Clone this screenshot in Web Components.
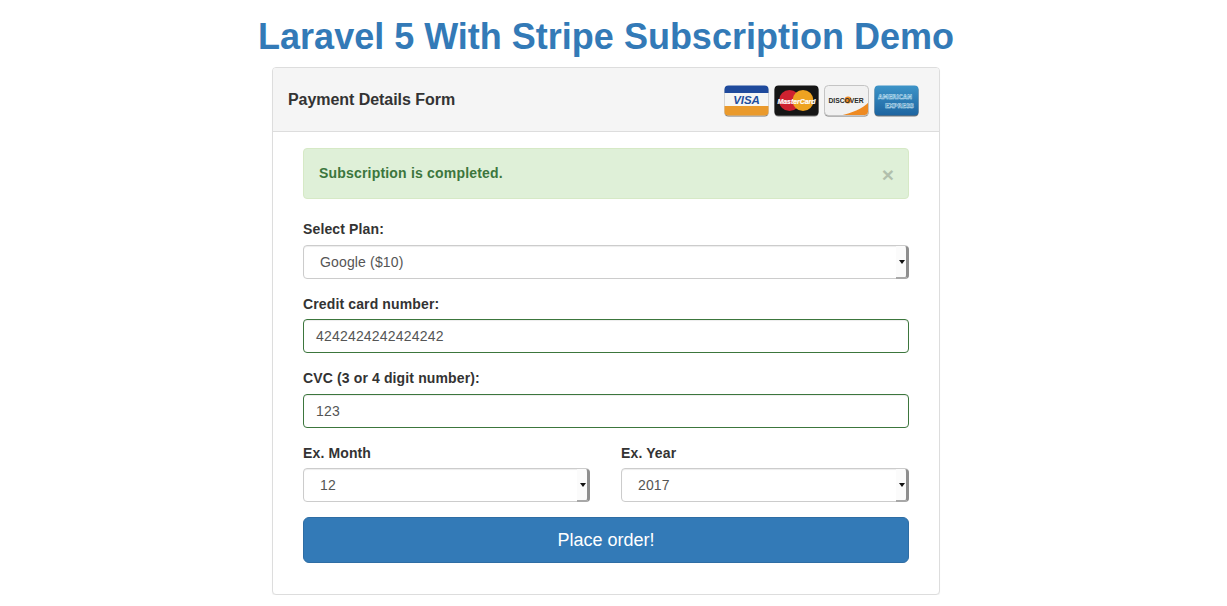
<!DOCTYPE html>
<html>
<head>
<meta charset="utf-8">
<title>Laravel 5 With Stripe Subscription Demo</title>
<style>
  html, body { margin: 0; padding: 0; background: #fff; }
  body { font-family: "Liberation Sans", Arial, sans-serif; font-size: 14px; color: #333; }
</style>
</head>
<body>

<template class="subscription-page-template">
  <style>
    :host { display: block; width: 1212px; box-sizing: border-box; }
    h1 { margin: 0; padding-top: 17px; height: 67px; box-sizing: border-box; text-align: center; color: #337ab7; font-size: 36px; line-height: 40px; font-weight: bold; }
    .wrap { width: 668px; margin: 0 auto; }
  </style>
  <h1><slot name="title"></slot></h1>
  <div class="wrap"><slot></slot></div>
</template>

<template class="form-panel-template">
  <style>
    :host { display: block; border: 1px solid #ddd; border-radius: 4px; box-shadow: 0 1px 1px rgba(0,0,0,.05); background: #fff; }
    .head { display: flex; align-items: center; justify-content: space-between; height: 64px; box-sizing: border-box; padding: 0 20px 0 15px; background: #f5f5f5; border-bottom: 1px solid #ddd; border-radius: 3px 3px 0 0; font-size: 16px; font-weight: bold; letter-spacing: -0.05px; color: #333; }
    .cards { display: flex; gap: 5px; margin-top: 2px; }
    .body { padding: 16px 30px 31px; }
  </style>
  <div class="head"><slot name="heading"></slot><div class="cards"><slot name="cards"></slot></div></div>
  <div class="body"><slot></slot></div>
</template>

<template class="card-logo-template">
  <style>
    :host { display: block; width: 45px; height: 32px; }
    svg { display: block; }
  </style>
  <svg width="45" height="32" viewBox="0 0 45 32"></svg>
</template>

<template class="alert-box-template">
  <style>
    :host { display: flex; align-items: center; justify-content: space-between; height: 51px; box-sizing: border-box; padding: 0 15px 2px; margin-bottom: 20.49px; background: #dff0d8; border: 1px solid #d6e9c6; border-radius: 4px; color: #3c763d; font-weight: bold; font-size: 14px; letter-spacing: 0.19px; }
    .close { font-size: 21px; line-height: 21px; color: #000; opacity: .2; margin: 3px -1px 0 0; letter-spacing: 0; }
  </style>
  <span><slot></slot></span>
  <span class="close">×</span>
</template>

<template class="form-field-template">
  <style>
    :host { display: block; margin-bottom: 14.89px; }
    label { display: block; font-weight: bold; font-size: 14px; letter-spacing: 0.13px; line-height: 20px; margin-bottom: 5.51px; color: #333; }
  </style>
  <label><slot name="label"></slot></label>
  <slot></slot>
</template>

<template class="select-box-template">
  <style>
    :host { display: block; position: relative; height: 34px; box-sizing: border-box; background: #fff; border: 1px solid #ccc; border-radius: 4px; font-size: 14px; letter-spacing: 0.15px; line-height: 32px; color: #555; padding-left: 16px; box-shadow: inset 0 1px 1px rgba(0,0,0,.075); }
    .btn { position: absolute; top: 0; right: -1px; bottom: -1px; width: 13px; border-right: 3px solid #8e8e8e; border-bottom: 2px solid #a8a8a8; border-radius: 0 4px 4px 0; box-sizing: border-box; background: #fbfbfb; }
    .btn::after { content: ""; position: absolute; left: 3px; top: 14px; border: 3px solid transparent; border-top: 4px solid #111; border-bottom: 0; }
  </style>
  <slot></slot>
  <span class="btn"></span>
</template>

<template class="text-box-template">
  <style>
    :host { display: block; height: 34px; box-sizing: border-box; background: #fff; border: 1px solid #3c763d; border-radius: 4px; font-size: 14px; letter-spacing: 0.19px; line-height: 32px; color: #555; padding-left: 12px; box-shadow: inset 0 1px 1px rgba(0,0,0,.075); }
  </style>
  <slot></slot>
</template>

<template class="two-columns-template">
  <style>
    :host { display: grid; grid-template-columns: 287px 288px; column-gap: 31px; margin-bottom: -0.4px; }
  </style>
  <slot></slot>
</template>

<template class="submit-button-template">
  <style>
    :host { display: block; height: 46px; box-sizing: border-box; background: #337ab7; border: 1px solid #2e6da4; border-radius: 6px; color: #fff; font-size: 18px; line-height: 44px; text-align: center; }
  </style>
  <slot></slot>
</template>

<subscription-page>
  <span slot="title">Laravel 5 With Stripe Subscription Demo</span>
  <form-panel>
    <span slot="heading">Payment Details Form</span>
    <card-logo slot="cards" kind="visa"></card-logo>
    <card-logo slot="cards" kind="mastercard"></card-logo>
    <card-logo slot="cards" kind="discover"></card-logo>
    <card-logo slot="cards" kind="amex"></card-logo>

    <alert-box>Subscription is completed.</alert-box>

    <form-field>
      <span slot="label">Select Plan:</span>
      <select-box>Google ($10)</select-box>
    </form-field>
    <form-field>
      <span slot="label">Credit card number:</span>
      <text-box>4242424242424242</text-box>
    </form-field>
    <form-field>
      <span slot="label">CVC (3 or 4 digit number):</span>
      <text-box>123</text-box>
    </form-field>
    <two-columns>
      <form-field>
        <span slot="label">Ex. Month</span>
        <select-box>12</select-box>
      </form-field>
      <form-field>
        <span slot="label">Ex. Year</span>
        <select-box>2017</select-box>
      </form-field>
    </two-columns>
    <submit-button>Place order!</submit-button>
  </form-panel>
</subscription-page>

<script>
// Small helper: every element below is just a template in a shadow root.
function templated(selector) {
  return class extends HTMLElement {
    constructor() {
      super()
      this.root = this.attachShadow({ mode: 'open' })
      this.root.appendChild(document.querySelector(selector).content.cloneNode(true))
    }
  }
}

customElements.define('subscription-page', templated('.subscription-page-template'))
customElements.define('form-panel', templated('.form-panel-template'))
customElements.define('alert-box', templated('.alert-box-template'))
customElements.define('form-field', templated('.form-field-template'))
customElements.define('select-box', templated('.select-box-template'))
customElements.define('text-box', templated('.text-box-template'))
customElements.define('two-columns', templated('.two-columns-template'))
customElements.define('submit-button', templated('.submit-button-template'))

/**
 * A credit card logo, picked with the kind attribute.
 */
class CardLogo extends templated('.card-logo-template') {
  connectedCallback() {
    const frame = '<rect x="0.5" y="1.5" width="44" height="30" rx="4" fill="#555" opacity=".8"/>'
    this.root.querySelector('svg').innerHTML = frame + CardLogo.art[this.getAttribute('kind')]
  }
}

const logoFont = 'font-family="Liberation Sans" font-weight="bold"'
const wideFont = 'font-family="DejaVu Sans" font-weight="bold"'
CardLogo.art = {
  visa: `
    <clipPath id="c"><rect x="0.5" y="0.5" width="44" height="30" rx="4"/></clipPath>
    <g clip-path="url(#c)">
      <rect width="45" height="31" fill="#f6f6f4"/>
      <rect width="45" height="8" fill="#1f4a9c"/>
      <rect y="21" width="45" height="10" fill="#ea9a2c"/>
    </g>
    <text x="22.5" y="19" text-anchor="middle" ${logoFont} font-style="italic" font-size="11.5" fill="#1f4f9f">VISA</text>`,
  mastercard: `
    <rect x="0.5" y="0.5" width="44" height="30" rx="4" fill="#161616"/>
    <circle cx="15.5" cy="15.5" r="10.5" fill="#cf2230"/>
    <circle cx="29" cy="15.5" r="10.5" fill="#eea321"/>
    <text x="22.5" y="18.5" text-anchor="middle" ${logoFont} font-style="italic" font-size="7.8" textLength="38" lengthAdjust="spacingAndGlyphs" fill="#fff" stroke="#fff" stroke-width=".2">MasterCard</text>`,
  discover: `
    <clipPath id="c"><rect x="0.5" y="0.5" width="44" height="30" rx="4"/></clipPath>
    <g clip-path="url(#c)">
      <rect width="45" height="31" fill="#f1f1f1"/>
      <path d="M15 31 C28 28 38 24 45 17 V31 Z" fill="#ee8a22"/>
    </g>
    <rect x="0.5" y="0.5" width="44" height="30" rx="4" fill="none" stroke="#c4c4c4"/>
    <circle cx="24" cy="15" r="3.4" fill="#ee8a22"/>
    <text x="22" y="17.6" text-anchor="middle" ${logoFont} font-size="7.4" textLength="35" lengthAdjust="spacingAndGlyphs" fill="#2a2a2a">DISCOVER</text>`,
  amex: `
    <defs><linearGradient id="a" x1="0" y1="0" x2="0" y2="1"><stop offset="0" stop-color="#3d94c8"/><stop offset="1" stop-color="#1d64a0"/></linearGradient></defs>
    <rect x="0.5" y="0.5" width="44" height="30" rx="4" fill="url(#a)"/>
    <text x="4" y="14" ${wideFont} font-size="6.2" textLength="34" lengthAdjust="spacingAndGlyphs" fill="#2f86bd" stroke="#d6ebf7" stroke-width=".45">AMERICAN</text>
    <text x="11" y="23" ${wideFont} font-size="6.2" textLength="29" lengthAdjust="spacingAndGlyphs" fill="#2a78b0" stroke="#d6ebf7" stroke-width=".45">EXPRESS</text>`
}

customElements.define('card-logo', CardLogo)
</script>
</body>
</html>
